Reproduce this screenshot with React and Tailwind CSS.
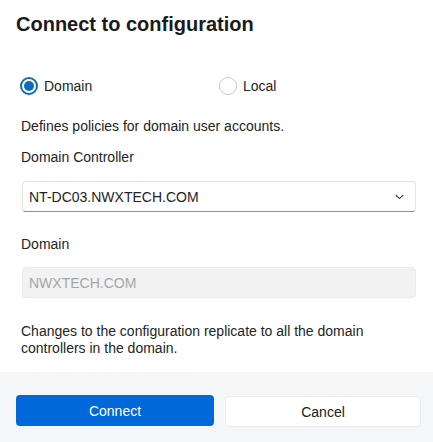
import React from "react";

export default function App() {
  return (
    <div
      className="w-[433px] h-[442px] bg-white flex flex-col text-[#242424]"
      style={{ fontFamily: '"Liberation Sans", Arial, sans-serif' }}
    >
      <div className="pt-[12px] pl-[16px] text-[20px] leading-[24px] font-bold text-[#1b1b1b]">
        Connect to configuration
      </div>

      <div className="mt-[40px] pl-[20px] flex items-center h-[20px] text-[14px] leading-[20px]">
        <div className="w-[199px] flex items-center">
          <span className="w-[18px] h-[18px] rounded-full border-2 border-[#0f6cbd] flex items-center justify-center">
            <span className="w-[10px] h-[10px] rounded-full bg-[#0f6cbd]" />
          </span>
          <span className="ml-[6px]">Domain</span>
        </div>
        <div className="flex items-center">
          <span className="w-[18px] h-[18px] rounded-full border border-[#c9c9c9] bg-white" />
          <span className="ml-[6px]">Local</span>
        </div>
      </div>

      <div className="pl-[21px] pr-[17px] flex flex-col text-[14px] leading-[20px]">
        <div className="mt-[20px]">Defines policies for domain user accounts.</div>
        <div className="mt-[11px]">Domain Controller</div>
        <div className="mt-[14px] ml-px h-[31px] rounded-[4px] border border-[#e3e3e3] border-b-[#8d8d8d] flex items-center justify-between pl-[6px] pr-[11px]">
          <span>NT-DC03.NWXTECH.COM</span>
          <svg width="9" height="6" viewBox="0 0 9 6" fill="none">
            <path d="M0.8 1 L4.5 4.6 L8.2 1" stroke="#424242" strokeWidth="1.1" />
          </svg>
        </div>
        <div className="mt-[22px]">Domain</div>
        <div className="mt-[13px] ml-px h-[31px] rounded-[4px] border border-[#ebebeb] bg-[#f2f2f2] flex items-center pl-[6px] text-[#a6a6a6]">
          NWXTECH.COM
        </div>
        <div className="mt-[25px] leading-[17px]">
          Changes to the configuration replicate to all the domain controllers in the domain.
        </div>
      </div>

      <div className="mt-[15px] flex-1 bg-[#f5f6f7] pt-[23px] pl-[16px] flex items-start text-[14px] leading-[20px]">
        <button className="w-[198px] h-[31px] rounded-[4px] bg-[#0068d9] text-white flex items-center justify-center">
          Connect
        </button>
        <button className="ml-[11px] mt-px w-[196px] h-[31px] rounded-[4px] bg-white border border-[#ececec] text-[#1b1b1b] flex items-center justify-center">
          Cancel
        </button>
      </div>
    </div>
  );
}
